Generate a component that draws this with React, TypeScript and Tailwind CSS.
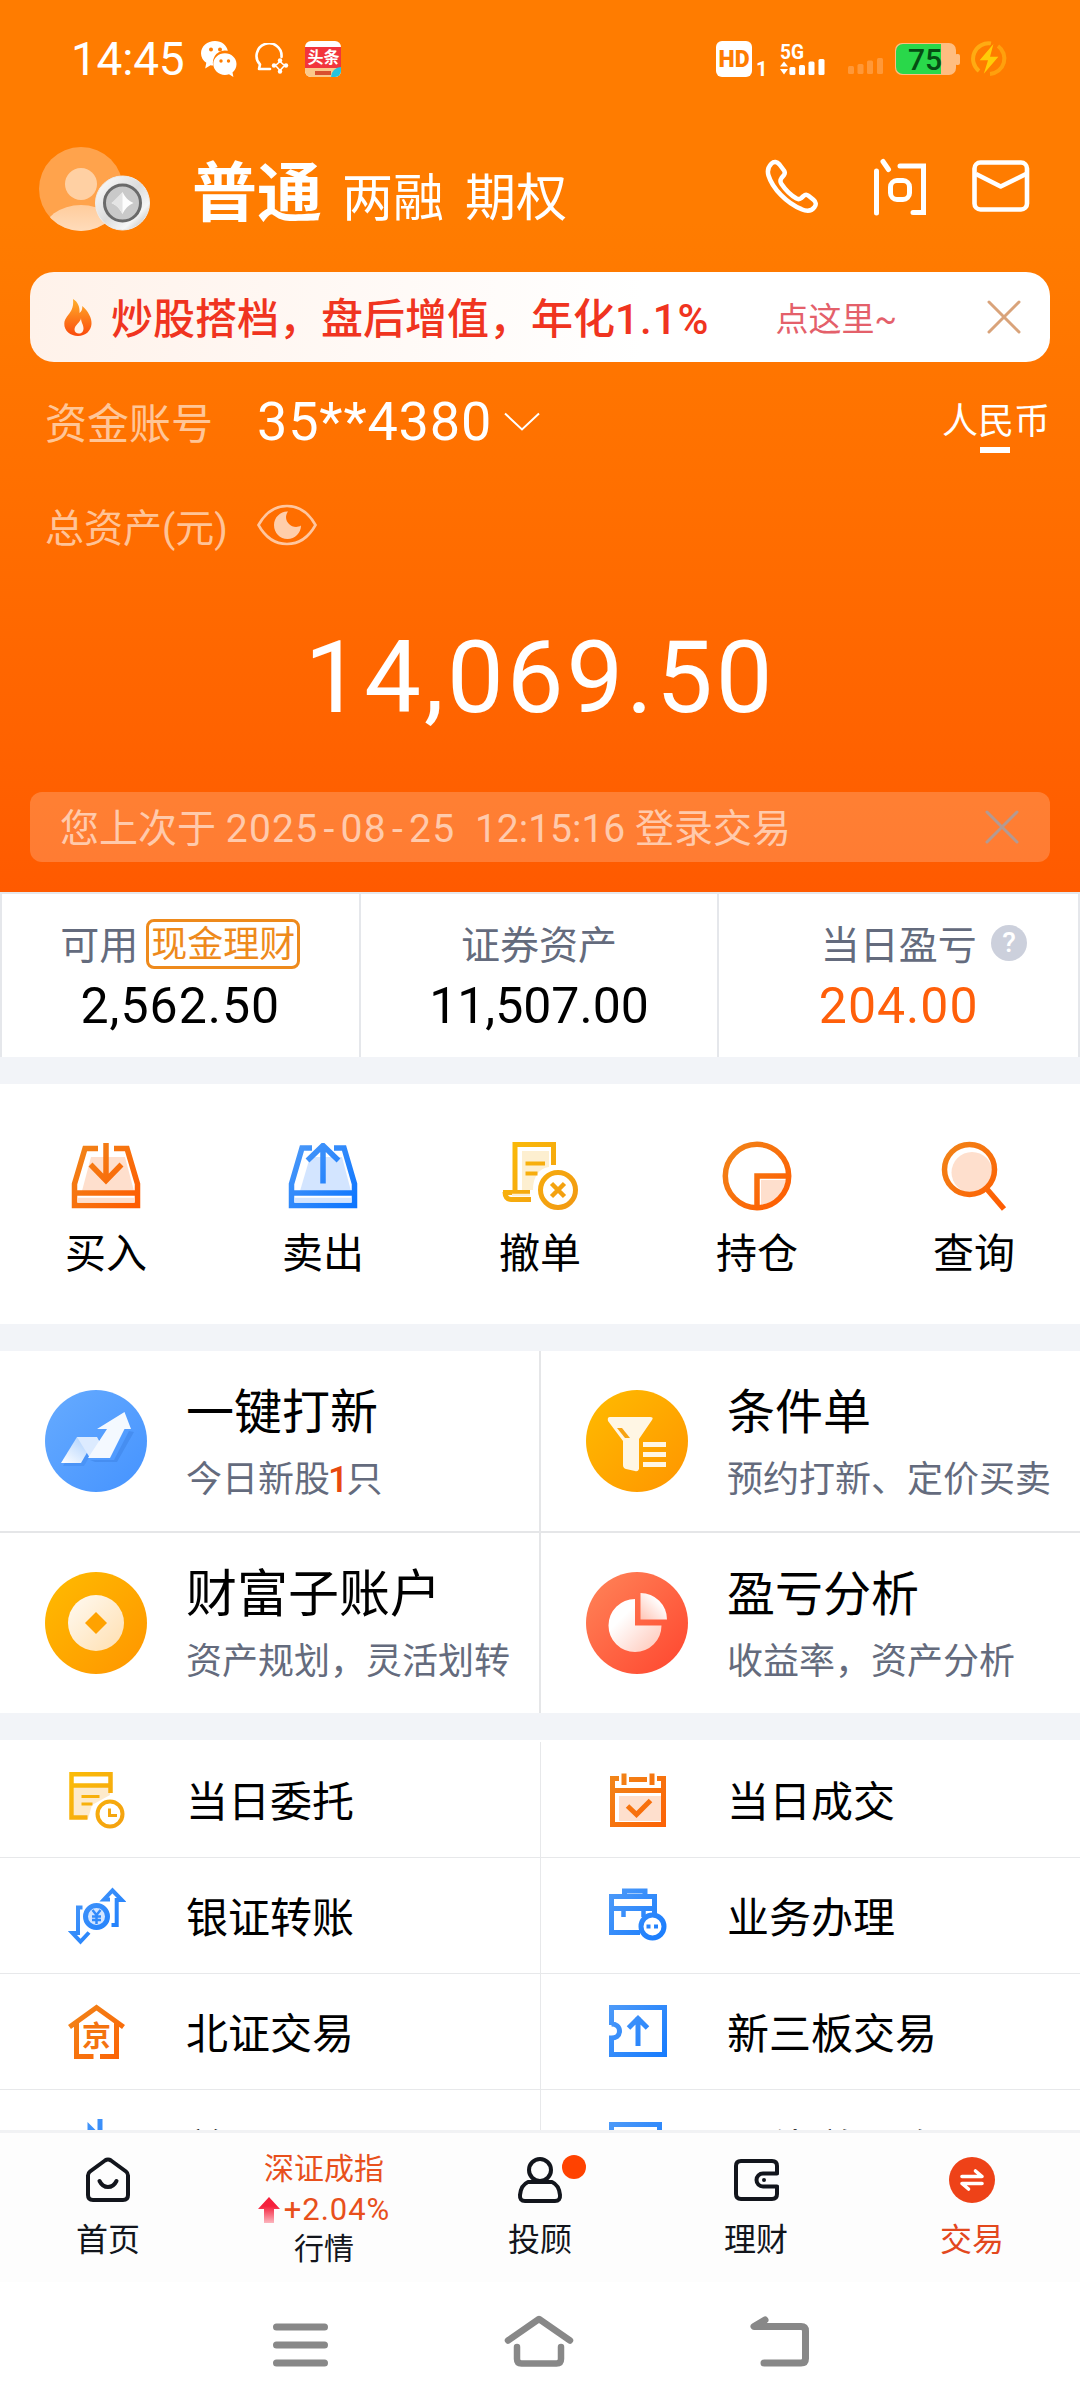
import type { ReactNode } from "react";

/* ─── status bar icons ────────────────────────────────────────────────────── */

function WechatIcon() {
  return (
    <svg width="36" height="36" viewBox="0 0 36 36" aria-hidden="true">
      <path d="M14 0C6.300 0 0 5.400 0 12.200c0 3.900 2 7.300 5.300 9.500L4.200 27.500l5.300-3.200c1 .2 1.900.3 2.800.3A12 12 0 0 1 26.800 9.800C25.800 4.200 20.500 0 14 0z" fill="#fff" />
      <path d="M35.500 23c0-6-5.200-10.800-11.600-10.800S12.300 17 12.300 23s5.200 10.900 11.600 10.900c1.500 0 2.800-.2 4.100-.7l4.400 2.800-.9-4.600c2.500-2 4-5 4-8.400z" fill="#fff" />
      <g fill="#ff7c00">
        <circle cx="10" cy="8.500" r="2" />
        <circle cx="19" cy="8.500" r="2" />
        <circle cx="20" cy="20" r="1.700" />
        <circle cx="27.500" cy="20" r="1.700" />
      </g>
    </svg>
  );
}

function ChatShareIcon() {
  return (
    <svg width="36" height="32" viewBox="0 0 36 32" fill="none" stroke="#fff" strokeWidth="2.600" strokeLinecap="round" strokeLinejoin="round" aria-hidden="true">
      <path d="M17 26H6l1-4.500A12.500 12.500 0 1 1 28.500 14" />
      <path d="M27 18.500 22.500 22.500 27 27.500 31.500 22.500z" strokeWidth="1.600" />
      <g fill="#fff" stroke="none">
        <circle cx="27" cy="17.500" r="2.200" />
        <circle cx="21" cy="22.500" r="2.200" />
        <circle cx="33" cy="22.500" r="2.200" />
        <circle cx="27" cy="28.500" r="2.200" />
      </g>
    </svg>
  );
}

function ToutiaoIcon() {
  return (
    <span className="flex h-9 w-9 flex-col overflow-hidden rounded-md bg-white pt-1.5">
      <span className="flex h-[21px] items-center justify-center bg-[#f2353d] text-[16px] leading-none font-bold text-white">头条</span>
      <span className="relative flex h-[9px] items-center justify-center bg-[#fbc98a]">
        <span className="h-1 w-4 bg-[#d9502f]" />
        <span className="absolute right-0 bottom-0 h-2.5 w-2.5 rounded-tl-full bg-[#27c3dc]" />
      </span>
    </span>
  );
}

function SignalIcon() {
  return (
    <svg width="46" height="38" viewBox="0 -4 46 38" fill="#fff" aria-hidden="true">
      <text x="0" y="15.500" fontSize="20" fontWeight="700" fontFamily="Roboto" textLength="24" lengthAdjust="spacingAndGlyphs">5G</text>
      <path d="M0 23.500h8l-4-5zM0 26h8l-4 5.500z" />
      <rect x="9.500" y="24" width="6" height="8" rx="1.500" />
      <rect x="19" y="22" width="6" height="10" rx="1.500" />
      <rect x="28.500" y="18.500" width="6" height="13.500" rx="1.500" />
      <rect x="38.500" y="16" width="6" height="16" rx="1.500" />
    </svg>
  );
}

function NoSignalIcon() {
  return (
    <svg width="36" height="34" viewBox="0 0 36 34" fill="#fff" fillOpacity=".22" aria-hidden="true">
      <rect x="0" y="24" width="6" height="8" rx="1.500" />
      <rect x="9.500" y="22" width="6" height="10" rx="1.500" />
      <rect x="19" y="18.500" width="6" height="13.500" rx="1.500" />
      <rect x="29" y="16" width="6" height="16" rx="1.500" />
    </svg>
  );
}

function BatteryIcon() {
  return (
    <svg width="66" height="34" viewBox="0 0 66 34" aria-hidden="true">
      <rect x="0" y="1" width="61" height="32" rx="7" fill="#ffbd80" />
      <rect x="60" y="12" width="5" height="11" rx="2" fill="#ffbd80" />
      <path d="M8 2H46V32H8a7 7 0 0 1-7-7V9a7 7 0 0 1 7-7z" fill="#29d84a" />
      <text x="13" y="28" fontSize="30" fontWeight="500" fontFamily="Roboto" fill="#054d13">75</text>
    </svg>
  );
}

function ChargeIcon() {
  return (
    <svg width="38" height="36" viewBox="0 0 38 36" aria-hidden="true">
      <path d="M21 2.500A15.500 15.500 0 0 0 9 30" fill="none" stroke="#ffab12" strokeWidth="4" />
      <path d="M28 5A15.500 15.500 0 0 1 20 33" fill="none" stroke="#ffa00d" strokeWidth="4" />
      <path d="M25 0 8 20h9l-5 16 18-21h-9z" fill="#ffcc08" stroke="#ff7c00" strokeWidth="1.500" />
    </svg>
  );
}

/* ─── header icons ────────────────────────────────────────────────────────── */

function Avatar() {
  return (
    <svg width="112" height="86" viewBox="0 0 112 86" aria-hidden="true">
      <defs>
        <clipPath id="avatar-clip">
          <circle cx="42" cy="43" r="42" />
        </clipPath>
        <linearGradient id="avatar-body" x1="0" y1="0" x2="0" y2="1">
          <stop offset="0" stopColor="#ffcc9c" />
          <stop offset="1" stopColor="#ffeede" />
        </linearGradient>
        <linearGradient id="badge-rim" x1="0" y1="0" x2="1" y2="1">
          <stop offset="0" stopColor="#ffffff" />
          <stop offset=".5" stopColor="#dcdcdc" />
          <stop offset=".75" stopColor="#f6f6f6" />
          <stop offset="1" stopColor="#a9a9a9" />
        </linearGradient>
      </defs>
      <circle cx="42" cy="43" r="42" fill="#ffa34c" />
      <g clipPath="url(#avatar-clip)">
        <circle cx="42" cy="38" r="16" fill="#ffd0a3" />
        <ellipse cx="42" cy="87" rx="38" ry="28" fill="url(#avatar-body)" />
      </g>
      <circle cx="83.500" cy="57" r="27" fill="url(#badge-rim)" stroke="#ececec" />
      <circle cx="83.500" cy="57" r="18" fill="#c9c9c9" stroke="#6a6a6a" strokeWidth="3" />
      <path d="M83.500 46c2.500 5 5.500 8.500 11 11-5.500 2.500-8.500 6-11 11-2.500-5-5.500-8.500-11-11 5.500-2.500 8.500-6 11-11z" fill="#fdfdfd" />
      <path d="M83.500 46v22c-2.500-5-5.500-8.500-11-11z" fill="#e4e4e4" />
    </svg>
  );
}

function PhoneIcon() {
  return (
    <svg width="54" height="56" viewBox="0 0 54 56" fill="none" stroke="#fff" strokeWidth="4.500" strokeLinejoin="round" aria-hidden="true">
      <path d="M6.500 5.500C9 3 12 3.500 14.500 6.500l4.500 6c1 1.500 1 3 0 4.500l-2.500 3c-1.500 2-1.300 4 0 6 4 6 9 11 15 14.500 1.500 1 3 .8 4.500-.3l2.500-2.200c1.500-1.500 3.500-1.500 5-.3l5 4c2.500 2 3 5 1 7.500-3 4-7.500 4.500-13 2C21.500 45 7.500 30.500 3.500 17.500 2 12.500 3.500 8.500 6.500 5.500z" />
    </svg>
  );
}

function AskIcon() {
  return (
    <svg width="54" height="58" viewBox="0 0 54 58" fill="none" stroke="#fff" strokeWidth="5" strokeLinecap="round" aria-hidden="true">
      <path d="M3.500 13v42M10 3.500l5.500 8M27 8h23.500v46.500H40" />
      <rect x="17.500" y="22.500" width="19" height="19" rx="6.500" />
    </svg>
  );
}

function MailIcon() {
  return (
    <svg width="58" height="52" viewBox="0 0 58 52" fill="none" stroke="#fff" strokeWidth="4.600" strokeLinejoin="round" aria-hidden="true">
      <rect x="2.500" y="2.500" width="52.500" height="47" rx="6" />
      <path d="M4 14l24.700 12.500L54 14" />
    </svg>
  );
}

function FlameIcon() {
  return (
    <svg width="28" height="37" viewBox="0 0 28 37" aria-hidden="true">
      <defs>
        <linearGradient id="flame" x1="0" y1="0" x2="0" y2="1">
          <stop offset="0" stopColor="#ffb02b" />
          <stop offset="1" stopColor="#fb4a0c" />
        </linearGradient>
      </defs>
      <path d="M9 0c5 3 7 8 6.500 14 2-1.500 3-3.500 2.800-7C24 12 28 19 27.500 25c-.5 7-6 12-13.500 12S0 32 .3 24.500C.5 19 5 16 7.500 11 9 8 9.500 4 9 0z" fill="url(#flame)" />
      <path d="M17 19c0 4-6.500 7-6.500 11.500 0 2.500 2 4 4.500 4s4.500-2 4.500-5c0-4-2.500-6-2.500-10.500z" fill="#fff3ea" />
    </svg>
  );
}

function CloseIcon({ className }: { className: string }) {
  return (
    <svg className={className} width="34" height="34" viewBox="0 0 34 34" fill="none" stroke="currentColor" strokeWidth="3" strokeLinecap="round" aria-hidden="true">
      <path d="M2 2l30 30M32 2L2 32" />
    </svg>
  );
}

function EyeIcon() {
  return (
    <svg width="60" height="42" viewBox="0 0 60 42" aria-hidden="true">
      <path d="M1.500 21C9 7.500 19 2 30 2s21 5.500 28.500 19C51 34.500 41 40 30 40S9 34.500 1.500 21z" fill="none" stroke="#ffc69f" strokeWidth="2.600" />
      <path d="M31 7.500C24 7 17 13 17 21s6 14 13.500 14S44 29 44 21.500c-4 2.500-9 1.500-12-1.500-3.500-3.500-4-8.500-1-12.500z" fill="#ffceab" />
    </svg>
  );
}

/* ─── quick action icons ──────────────────────────────────────────────────── */

function Gradients() {
  return (
    <svg className="absolute h-0 w-0" aria-hidden="true">
      <defs>
        <linearGradient id="orange" gradientUnits="userSpaceOnUse" x1="0" y1="0" x2="70" y2="66">
          <stop offset="0" stopColor="#f0871a" />
          <stop offset="1" stopColor="#ff5a00" />
        </linearGradient>
        <linearGradient id="blue" gradientUnits="userSpaceOnUse" x1="0" y1="0" x2="70" y2="66">
          <stop offset="0" stopColor="#4f9bf8" />
          <stop offset="1" stopColor="#0a74ff" />
        </linearGradient>
        <linearGradient id="amber" gradientUnits="userSpaceOnUse" x1="0" y1="0" x2="70" y2="66">
          <stop offset="0" stopColor="#fbbd08" />
          <stop offset="1" stopColor="#f29a12" />
        </linearGradient>
      </defs>
    </svg>
  );
}

function BuyIcon() {
  return (
    <svg width="70" height="66" viewBox="0 0 70 66" fill="none" stroke="url(#orange)" strokeWidth="5.500" aria-hidden="true">
      <path d="M20 14h34l9 34H11z" fill="#fedfcd" stroke="none" />
      <path d="M27 5.500H14L3.500 41v21.500h63V41L56 5.500H43" />
      <path d="M3.500 50h63" />
      <path d="M7 57h56" stroke="#fedfcd" strokeWidth="4.500" />
      <path d="M35.010 0 35 36M19.500 21.500 35 37.500 50.500 21.500" />
    </svg>
  );
}

function SellIcon() {
  return (
    <svg width="70" height="66" viewBox="0 0 70 66" fill="none" stroke="url(#blue)" strokeWidth="5.500" aria-hidden="true">
      <path d="M22 14h32l9 34H12z" fill="#d3e5ff" stroke="none" />
      <path d="M24 5H14L3.500 41v21.500h63V41L56 5H46" />
      <path d="M3.500 50h63" />
      <path d="M7 57h56" stroke="#d3e5ff" strokeWidth="4.500" />
      <path d="M35.010 40.500 35 4M19.500 17.500 35 2.500 50.500 17.500" />
    </svg>
  );
}

function CancelIcon() {
  return (
    <svg width="76" height="70" viewBox="0 0 76 70" fill="none" stroke="url(#amber)" strokeWidth="5" aria-hidden="true">
      <path d="M20 10h27v16C37 27 31 36 31 49H20z" fill="#fdefd0" stroke="none" />
      <path d="M13 51V3.500h38.500V24" />
      <path d="M23.500 22.500H43M23.500 32.500h12" strokeWidth="4.200" />
      <path d="M29 58.500H9c-4 0-6-3-6-7.500M1 51.500h27" />
      <path d="M10 54h18" stroke="#fdefd0" strokeWidth="2.500" />
      <circle cx="56" cy="49" r="17.500" />
      <path d="M49.500 42.500l13 13M62.500 42.500l-13 13" strokeWidth="4.500" />
    </svg>
  );
}

function HoldingIcon() {
  return (
    <svg width="70" height="70" viewBox="0 0 70 70" fill="none" stroke="url(#orange)" strokeWidth="5.500" aria-hidden="true">
      <path d="M39 39h25a30 30 0 0 1-25 25z" fill="#fedfcd" stroke="none" />
      <circle cx="35" cy="35" r="31.700" />
      <path d="M35 66V35h31" />
    </svg>
  );
}

function SearchIcon() {
  return (
    <svg width="70" height="70" viewBox="0 0 70 70" fill="none" stroke="url(#orange)" strokeWidth="5.500" aria-hidden="true">
      <circle cx="33" cy="31.500" r="20.500" fill="#fedfcd" stroke="none" />
      <circle cx="30.500" cy="28.500" r="25" />
      <path d="M47 47l18 21" />
    </svg>
  );
}

/* ─── feature card icons ──────────────────────────────────────────────────── */

function TrendIcon() {
  return (
    <svg width="102" height="102" viewBox="0 0 102 102" aria-hidden="true">
      <defs>
        <linearGradient id="trend-bg" x1="0" y1="0" x2="1" y2="1">
          <stop offset="0" stopColor="#66abff" />
          <stop offset="1" stopColor="#4593ff" />
        </linearGradient>
        <linearGradient id="trend-fold" x1="0" y1="1" x2="1" y2="0">
          <stop offset="0" stopColor="#fff" />
          <stop offset="1" stopColor="#9fc9fd" />
        </linearGradient>
      </defs>
      <circle cx="51" cy="51" r="51" fill="url(#trend-bg)" />
      <path d="M18 76h21l16-27H34z" fill="#3f88ee" opacity=".45" />
      <path d="M45 70h24l15-29 5 1-17 30H50z" fill="#3f86e8" opacity=".6" />
      <path d="M16 73h20l15-26H32z" fill="url(#trend-fold)" />
      <path d="M32 47h20l4 7-11 14z" fill="#dcebff" />
      <path d="M43 68h22l14.500-29H86L79.500 22 52 39h10z" fill="#f4f9ff" />
    </svg>
  );
}

function FunnelIcon() {
  return (
    <svg width="102" height="102" viewBox="0 0 102 102" aria-hidden="true">
      <defs>
        <linearGradient id="gold-bg" x1="0" y1="0" x2="1" y2="1">
          <stop offset="0" stopColor="#ffbb00" />
          <stop offset="1" stopColor="#ff9500" />
        </linearGradient>
      </defs>
      <circle cx="51" cy="51" r="51" fill="url(#gold-bg)" />
      <path d="M24 27h40q4 0 2 3L53 49v30q-1 3-4 2l-9-2q-3-1-3-4V51L22 31q-1-4 2-4z" fill="#fff6e4" />
      <path d="M31 38h5l8 10h-5z" fill="#f7a313" />
      <path d="M57 54.500h23M57 64.500h23M57 74.500h23" stroke="#fff6e4" strokeWidth="5" />
    </svg>
  );
}

function CoinIcon() {
  return (
    <svg width="102" height="102" viewBox="0 0 102 102" aria-hidden="true">
      <defs>
        <linearGradient id="coin" x1="0" y1="0" x2="1" y2="1">
          <stop offset="0" stopColor="#fffaf2" />
          <stop offset="1" stopColor="#ffdfb0" />
        </linearGradient>
      </defs>
      <circle cx="51" cy="51" r="51" fill="url(#gold-bg)" />
      <circle cx="51" cy="51" r="28" fill="url(#coin)" />
      <path d="M51 40l11 11-11 11-11-11z" fill="#ffa200" />
    </svg>
  );
}

function PieIcon() {
  return (
    <svg width="102" height="102" viewBox="0 0 102 102" aria-hidden="true">
      <defs>
        <linearGradient id="pie-bg" x1="0" y1="0" x2="1" y2="1">
          <stop offset="0" stopColor="#ff8559" />
          <stop offset="1" stopColor="#ff452e" />
        </linearGradient>
        <linearGradient id="pie" x1="0" y1="0" x2="1" y2="1">
          <stop offset=".3" stopColor="#fff" />
          <stop offset="1" stopColor="#ffc4b5" />
        </linearGradient>
        <linearGradient id="slice" x1="1" y1="0" x2="0" y2="1">
          <stop offset=".3" stopColor="#fff" />
          <stop offset="1" stopColor="#ffc4b5" />
        </linearGradient>
      </defs>
      <circle cx="51" cy="51" r="51" fill="url(#pie-bg)" />
      <path d="M49 27v26.500h26.500A26.500 26.500 0 1 1 49 27z" fill="url(#pie)" />
      <path d="M54.500 21A26.500 26.500 0 0 1 81 47.500H54.500z" fill="url(#slice)" />
    </svg>
  );
}

/* ─── list icons ──────────────────────────────────────────────────────────── */

function ListIcon({ children }: { children: ReactNode }) {
  return (
    <svg width="58" height="58" viewBox="0 0 58 58" fill="none" strokeWidth="5" aria-hidden="true">
      {children}
    </svg>
  );
}

function OrderIcon() {
  return (
    <ListIcon>
      <path d="M6 16h36v8L24 34l-4 14H6z" fill="#fdeacb" />
      <g stroke="url(#amber)">
        <path d="M19.500 46.500H3.500V3.200h39V22M3.500 14.500h39" strokeWidth="4.500" />
        <path d="M13.500 25.500h18M13.500 33h11" strokeWidth="3" />
        <circle cx="42" cy="43" r="12.500" strokeWidth="4" />
        <path d="M41.500 37.500v7H49" strokeWidth="3" />
      </g>
    </ListIcon>
  );
}

function CalendarIcon() {
  return (
    <ListIcon>
      <path d="M10 25h42v25H10z" fill="#fedfcd" />
      <g stroke="url(#orange)">
        <path d="M10 7.500H3.500v46h51v-46H48M20 8.500h18M3.500 19.500h51" />
        <path d="M15 2.500v11.500M43 2.500v11.500" />
        <path d="M18.500 35l9 8.500 14-14" />
      </g>
    </ListIcon>
  );
}

function TransferIcon() {
  return (
    <ListIcon>
      <g stroke="url(#blue)">
        <circle cx="28.500" cy="29.500" r="11" fill="#d3e5ff" />
        <path d="M24.500 23l4 5 4-5M28.500 28v9M24 29.500h9M24 33h9" strokeWidth="2.500" />
        <path d="M14.500 20.500H10V46H4.500L12.500 54.500 21 45.500" strokeWidth="4" />
        <path d="M43.500 38h5.200V13h5L44.500 3.500 36 12.500h6" strokeWidth="4" />
      </g>
    </ListIcon>
  );
}

function ServiceIcon() {
  return (
    <ListIcon>
      <g stroke="url(#blue)">
        <path d="M15.500 8.500V4h20.500v4.500" />
        <path d="M31 45.500H2.500V9.500h43V27M2.500 21.500h43" />
        <path d="M14.500 21v9M34.500 21v9" strokeWidth="4.500" />
        <circle cx="43.500" cy="39.500" r="11.500" fill="#fff" />
        <path d="M37.500 39.500h4M45 39.500h4" strokeWidth="4" />
      </g>
    </ListIcon>
  );
}

function BeijingIcon() {
  return (
    <ListIcon>
      <path d="M1.500 24 28.500 4.500 55.500 24M8.500 20v33.500H25.500M32 53.500h16.500V20" stroke="url(#orange)" />
      <text x="28.500" y="44" textAnchor="middle" fontSize="29" fontWeight="700" fontFamily="Noto Sans CJK SC" fill="#f4730f">京</text>
    </ListIcon>
  );
}

function TicketIcon() {
  return (
    <ListIcon>
      <path d="M2.500 22V4.500h53V51.500H2.500V35c4 0 8-2 8-7s-4-7-8-7M29.010 43 29 14M19.500 25 29 15.500 38.500 25" stroke="url(#blue)" />
    </ListIcon>
  );
}

function FlashIcon() {
  return (
    <ListIcon>
      <path d="M22 54V9l10 10V0" stroke="url(#blue)" />
    </ListIcon>
  );
}

function WindowIcon() {
  return (
    <ListIcon>
      <path d="M2.500 54V5.500h48V54" stroke="url(#blue)" />
    </ListIcon>
  );
}

/* ─── tab bar icons ───────────────────────────────────────────────────────── */

function TabIcon({ children }: { children: ReactNode }) {
  return (
    <svg width="50" height="48" viewBox="0 0 50 48" fill="none" stroke="#12151c" strokeWidth="4" strokeLinecap="round" strokeLinejoin="round" aria-hidden="true">
      {children}
    </svg>
  );
}

const tabIcons: Record<string, ReactNode> = {
  首页: (
    <TabIcon>
      <path d="M25 3.500q1.500 0 3 1L43 15.500q2 1.500 2 4V39q0 5-5 5H10q-5 0-5-5V19.500q0-2.500 2-4L22 4.500q1.500-1 3-1z" />
      <path d="M16.500 25c2 4 5 6 8.500 6s6.500-2 8.500-6" />
    </TabIcon>
  ),
  投顾: (
    <TabIcon>
      <circle cx="25" cy="14" r="11" />
      <path d="M13 26h24q7 3 8 13 .5 6-5 6H10q-5.500 0-5-6 1-10 8-13z" />
    </TabIcon>
  ),
  理财: (
    <TabIcon>
      <path d="M46 17V10q0-5-5-5H10Q5 5 5 10v28q0 5 5 5h31q5 0 5-5v-7" />
      <path d="M46 17.500H32a6.500 6.500 0 0 0 0 13h14M33 24h0" />
    </TabIcon>
  ),
  交易: (
    <TabIcon>
      <circle cx="25" cy="24" r="23" fill="#ee4218" stroke="none" />
      <path d="M15 20.500h20L28.500 15M35 27.500H15l6.500 5.500" stroke="#fff" strokeWidth="3.600" />
    </TabIcon>
  ),
};

/* ─── data ────────────────────────────────────────────────────────────────── */

const quickActions = [
  { label: "买入", icon: <BuyIcon /> },
  { label: "卖出", icon: <SellIcon /> },
  { label: "撤单", icon: <CancelIcon /> },
  { label: "持仓", icon: <HoldingIcon /> },
  { label: "查询", icon: <SearchIcon /> },
];

const features = [
  {
    title: "一键打新",
    body: (
      <>
        今日新股<span className="-mx-0.5 font-medium text-[#e8490f]">1</span>只
      </>
    ),
    icon: <TrendIcon />,
    size: "text-5xl",
  },
  { title: "条件单", body: "预约打新、定价买卖", icon: <FunnelIcon />, size: "text-5xl" },
  { title: "财富子账户", body: "资产规划，灵活划转", icon: <CoinIcon />, size: "text-[51px]" },
  { title: "盈亏分析", body: "收益率，资产分析", icon: <PieIcon />, size: "text-5xl" },
];

const services = [
  { label: "当日委托", icon: <OrderIcon /> },
  { label: "当日成交", icon: <CalendarIcon /> },
  { label: "银证转账", icon: <TransferIcon /> },
  { label: "业务办理", icon: <ServiceIcon /> },
  { label: "北证交易", icon: <BeijingIcon /> },
  { label: "新三板交易", icon: <TicketIcon /> },
  { label: "普通", icon: <FlashIcon /> },
  { label: "国债逆回购", icon: <WindowIcon /> },
];

/* ─── sections ────────────────────────────────────────────────────────────── */

function StatusBar() {
  return (
    <div className="flex h-[118px] items-center pr-[72px] pl-[71px] text-white">
      <span className="text-[46px] leading-none tracking-[-0.005em]">14:45</span>
      <div className="ml-[17px] flex items-center gap-[16px]">
        <WechatIcon />
        <ChatShareIcon />
        <ToutiaoIcon />
      </div>
      <div className="ml-auto flex items-center">
        <span className="flex h-9 w-9 items-center justify-center rounded-md bg-white text-[23px] leading-none font-black text-[#ff7c00]">HD</span>
        <span className="mt-5 ml-1 w-6 text-xl leading-none font-bold">1</span>
        <span className="-mt-0.5"><SignalIcon /></span>
        <span className="ml-[22px]"><NoSignalIcon /></span>
        <span className="ml-[11px]"><BatteryIcon /></span>
        <span className="ml-[9px]"><ChargeIcon /></span>
      </div>
    </div>
  );
}

function AccountHeader() {
  return (
    <section className="flex h-[892px] flex-col bg-linear-to-b from-[#ff7c00] from-25% to-[#ff5a00]">
      <StatusBar />

      <div className="flex h-[154px] items-start pt-7 pr-[50px] pl-[39px] text-white">
        <Avatar />
        <div className="mt-[3px] ml-[41px] flex items-baseline">
          <h1 className="text-[65px] leading-[90px] font-bold">普通</h1>
          <span className="ml-5 text-[51px]">两融</span>
          <span className="ml-[21px] text-[51px]">期权</span>
        </div>
        <div className="mt-3 ml-auto flex items-start">
          <PhoneIcon />
          <span className="ml-[54px]"><AskIcon /></span>
          <span className="mt-0.5 ml-[45px]"><MailIcon /></span>
        </div>
      </div>

      <div className="mx-[30px] flex h-[90px] items-center rounded-3xl bg-linear-to-r from-[#fff2ea] to-white to-60% pr-[29px] pl-[34px]">
        <FlameIcon />
        <span className="ml-[19px] pt-1.5 text-[42px] leading-none font-medium text-[#f03420]">
          炒股搭档，盘后增值，年化<span className="tracking-[0.025em]">1.1%</span>
        </span>
        <span className="ml-auto pt-1 text-[33px] leading-none text-[#e4606a]">点这里~</span>
        <CloseIcon className="ml-[90px] text-[#d9a37a]" />
      </div>

      <div className="flex h-[116px] items-center pt-1 pr-[30px] pl-[45px] text-white">
        <span className="w-[212px] pt-1.5 text-[42px] leading-none text-white/60">资金账号</span>
        <span className="text-[54px] leading-none tracking-[0.015em]">35**4380</span>
        <svg className="ml-3" width="36" height="20" viewBox="0 0 36 20" fill="none" stroke="#fff" strokeWidth="2" aria-hidden="true">
          <path d="M1 1.500 18 17.500 35 1.500" />
        </svg>
        <span className="relative ml-auto text-[36px] leading-none">
          人民币
          <span className="absolute -bottom-[13px] left-[38px] h-1.5 w-[30px] bg-white" />
        </span>
      </div>

      <div className="flex h-[94px] items-center pl-[45px]">
        <span className="pt-2 text-[39px] leading-none text-white/60">总资产(元)</span>
        <span className="ml-[29px]"><EyeIcon /></span>
      </div>

      <div className="flex h-[220px] items-center justify-center pb-2.5 text-[101px] leading-none tracking-[0.03em] text-white">14,069.50</div>

      <div className="mx-[30px] flex h-[70px] items-center rounded-xl bg-white/20 pr-[31px] pl-[30px]">
        <span className="pt-1 text-[39px] leading-none whitespace-pre text-white/60">
          您上次于{" "}
          <span className="tracking-[0.033em]">
            2025<span className="mx-[5px]">-</span>08<span className="mx-[5px]">-</span>25
          </span>
          {"  12:15:16 登录交易"}
        </span>
        <CloseIcon className="ml-auto text-[#b39a93]" />
      </div>
    </section>
  );
}

function Balances() {
  return (
    <section className="grid h-[165px] grid-cols-3 divide-x-2 divide-[#e5e7eb] border-x-2 border-t-2 border-[#e5e7eb] bg-white text-center">
      <div className="pt-[27px]">
        <p className="flex items-center justify-center gap-2 text-[39px] leading-[50px] text-[#646b7d]">
          可用
          <span className="-mt-1 rounded-lg border-3 border-[#ee8a1c] px-[2px] pt-0.5 text-[36px] leading-[42px] text-[#ee8a1c]">现金理财</span>
        </p>
        <p className="mt-1.5 text-[50px] leading-[58px] tracking-[0.02em]">2,562.50</p>
      </div>
      <div className="pt-[27px]">
        <p className="text-[39px] leading-[50px] text-[#646b7d]">证券资产</p>
        <p className="mt-1.5 text-[50px] leading-[58px]">11,507.00</p>
      </div>
      <div className="pt-[27px]">
        <p className="relative text-[39px] leading-[50px] text-[#646b7d]">
          当日盈亏
          <span className="absolute top-1 right-[51px] flex h-9 w-9 items-center justify-center rounded-full bg-[#ccd0dc] text-[28px] leading-none font-medium text-white">?</span>
        </p>
        <p className="mt-1.5 text-[50px] leading-[58px] tracking-[0.02em] text-[#ff5f0a]">204.00</p>
      </div>
    </section>
  );
}

function TabBar() {
  return (
    <nav className="relative grid h-[152px] grid-cols-5 border-t-3 border-[#f1f2f4] bg-[#fdfdfd] text-[32px] leading-none text-[#12151c]" aria-label="主导航">
      <a className="flex flex-col items-center gap-5 pt-[23px]">
        {tabIcons["首页"]}
        首页
      </a>
      <a className="flex flex-col items-center pt-[21px] text-[30px]">
        <span className="text-[#e8501c]">深证成指</span>
        <span className="mt-[10px] flex items-center gap-1 text-[31px] tracking-[0.03em] text-[#e8501c]">
          <svg width="22" height="26" viewBox="0 0 22 26" aria-hidden="true">
            <defs>
              <linearGradient id="rise" x1="0" y1="0" x2="0" y2="1">
                <stop offset=".35" stopColor="#f5203c" />
                <stop offset="1" stopColor="#fcb6be" />
              </linearGradient>
            </defs>
            <path d="M11 0 22 12h-6v14H6V12H0z" fill="url(#rise)" />
          </svg>
          +2.04%
        </span>
        <span className="mt-[9px]">行情</span>
      </a>
      <a className="relative flex flex-col items-center gap-5 pt-[23px]">
        {tabIcons["投顾"]}
        投顾
        <span className="absolute top-[22px] right-[62px] h-6 w-6 rounded-full bg-[#ff4200]" />
      </a>
      <a className="flex flex-col items-center gap-5 pt-[23px]">
        {tabIcons["理财"]}
        理财
      </a>
      <a className="flex flex-col items-center gap-5 pt-[23px] text-[#e3481d]">
        {tabIcons["交易"]}
        交易
      </a>
    </nav>
  );
}

function SystemNav() {
  return (
    <div className="flex h-[126px] items-start justify-between bg-white pt-[31px] pr-[270px] pl-[271px]">
      <svg width="58" height="56" viewBox="0 0 58 56" stroke="#888" strokeWidth="7" strokeLinecap="round" aria-hidden="true">
        <path d="M5.500 14h48M5.500 32h48M5.500 50h48" />
      </svg>
      <svg width="72" height="56" viewBox="0 0 72 56" fill="none" stroke="#888" strokeWidth="6.500" strokeLinecap="round" strokeLinejoin="round" aria-hidden="true">
        <path d="M5 27.500 36 6l31 21.500M14 34v12q0 4.500 4.500 4.500h35q4.500 0 4.500-4.500V34" />
      </svg>
      <svg width="62" height="56" viewBox="0 0 62 56" fill="none" stroke="#888" strokeWidth="7" strokeLinecap="round" strokeLinejoin="round" aria-hidden="true">
        <path d="M17 7 6 13.500h47q4.500 0 4.500 4.500v27.500q0 4.500-4.500 4.500H16" />
      </svg>
    </div>
  );
}

/* ─── page ────────────────────────────────────────────────────────────────── */

export default function App() {
  return (
    <main className="flex h-[2408px] w-[1080px] flex-col overflow-hidden bg-[#f2f4f8] font-[Roboto,'Noto_Sans_CJK_SC',sans-serif] text-black">
      <Gradients />
      <AccountHeader />
      <Balances />

      <section className="mt-[27px] flex h-60 items-start justify-between bg-white px-[62px] pt-[57px]">
        {quickActions.map((action) => (
          <div key={action.label} className="flex w-[88px] flex-col items-center">
            <span className="flex h-[70px] items-center">{action.icon}</span>
            <span className="mt-[22px] text-[41px] leading-[42px] whitespace-nowrap">{action.label}</span>
          </div>
        ))}
      </section>

      <section className="mt-[27px] grid grid-cols-2 gap-0.5 bg-[#e5e6e8]">
        {features.map((feature) => (
          <div key={feature.title} className="flex h-[180px] items-center bg-white pl-[45px]">
            {feature.icon}
            <div className="ml-[39px] pt-1">
              <h2 className={`${feature.size} leading-[60px]`}>{feature.title}</h2>
              <p className="mt-3.5 text-[36px] leading-[46px] text-[#646b7d]">{feature.body}</p>
            </div>
          </div>
        ))}
      </section>

      <section className="mt-[27px] h-[390px] shrink-0 overflow-hidden bg-white pt-0.5">
        <div className="grid grid-cols-2">
          {services.map((service) => (
            <div key={service.label} className="flex h-[116px] items-center border-b border-[#e7e8ea] pl-[68px] even:border-l">
              {service.icon}
              <span className="ml-[60px] pt-1.5 text-[42px] leading-none">{service.label}</span>
            </div>
          ))}
        </div>
      </section>

      <TabBar />
      <SystemNav />
    </main>
  );
}
